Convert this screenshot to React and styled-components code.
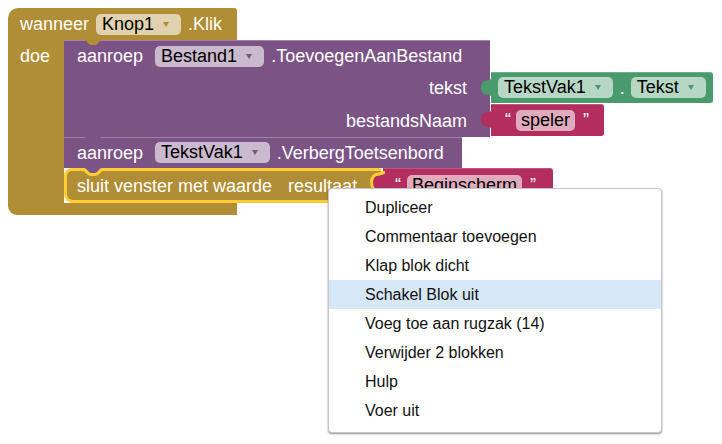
import React from 'react';
import styled, { createGlobalStyle } from 'styled-components';

const GOLD = '#B18E35';
const PURPLE = '#7C5385';
const GREEN = '#499B6D';
const RED = '#B32D5E';
const SELECT = '#FFCC33';

const GlobalStyle = createGlobalStyle`
    body {
        margin: 0;
        background: #fff;
        font-family: "Liberation Sans", Arial, sans-serif;
    }
`;

const Canvas = styled("div")`
    position: relative;
    width: 722px;
    height: 444px;
    overflow: hidden;
    background: #fff;
`;

const EventBlock = styled("div")`
    position: absolute;
    left: 8px;
    top: 8px;
    display: flex;
    flex-direction: column;
`;

const EventHeader = styled("div")`
    width: 229px;
    height: 32px;
    box-sizing: border-box;
    padding-left: 12px;
    display: flex;
    align-items: center;
    background: ${GOLD};
    border-radius: 10px 3px 0 0;
`;

const EventBody = styled("div")`
    display: flex;
`;

const Spine = styled("div")`
    width: 56px;
    flex-shrink: 0;
    box-sizing: border-box;
    padding-left: 12px;
    background: ${GOLD};
`;

const EventFooter = styled("div")`
    width: 229px;
    height: 12px;
    background: ${GOLD};
    border-radius: 0 0 0 9px;
`;

const Stack = styled("div")`
    position: relative;
    display: flex;
    flex-direction: column;
`;

const Label = styled("span")`
    color: #fff;
    font-size: 18px;
    line-height: 32px;
    white-space: nowrap;
    margin-left: ${props => props.$gap || 0}px;
`;

const Field = styled("span")`
    display: inline-flex;
    align-items: center;
    height: 21px;
    box-sizing: border-box;
    padding: ${props => props.$plain ? '0 5px' : '0 12px 0 6px'};
    margin-left: ${props => props.$gap || 0}px;
    border-radius: 5px;
    background: rgba(255, 255, 255, 0.6);
    color: #000;
    font-size: 18px;
    line-height: 21px;
    white-space: nowrap;
`;

const Arrow = styled("span")`
    width: 0;
    height: 0;
    margin-left: 9px;
    border-left: 3px solid transparent;
    border-right: 3px solid transparent;
    border-top: 5px solid ${props => props.$color};
`;

const Quote = styled("span")`
    color: #fff;
    font-size: 18px;
    line-height: 21px;
    margin: 0 ${props => props.$right || 0}px 0 ${props => props.$left || 0}px;
`;

const Statement = styled("div")`
    position: relative;
    display: flex;
    flex-direction: column;
`;

const Row = styled("div")`
    display: flex;
    align-items: flex-start;
`;

const Segment = styled("div")`
    width: ${props => props.$width}px;
    height: ${props => props.$height}px;
    box-sizing: border-box;
    display: flex;
    align-items: center;
    justify-content: ${props => props.$end ? 'flex-end' : 'flex-start'};
    padding: 0 23px 0 13px;
    background: ${props => props.$color};
    box-shadow: ${props => props.$top ? 'inset 0 1px 0 rgba(255, 255, 255, 0.28)' : 'none'};
`;

const ValueBlock = styled("div")`
    position: relative;
    height: ${props => props.$height}px;
    box-sizing: border-box;
    display: flex;
    align-items: center;
    padding: 0 ${props => props.$right}px 0 ${props => props.$left}px;
    margin-left: ${props => props.$gap || 0}px;
    background: ${props => props.$color};
    border-radius: 0 3px 3px 0;
    box-shadow: inset 0 1px 0 rgba(255, 255, 255, 0.2);
`;

const TabSvg = styled("svg")`
    position: absolute;
    left: -10px;
    top: ${props => props.$top}px;
    overflow: visible;
`;

const NotchSvg = styled("svg")`
    position: absolute;
    left: 20px;
    top: ${props => props.$top};
    z-index: 2;
    overflow: visible;
`;

const Selected = styled("div")`
    position: relative;
    width: 317px;
    height: 35px;
    box-sizing: border-box;
    display: flex;
    align-items: center;
    padding-left: 10px;
    background: ${GOLD};
    border: 3px solid ${SELECT};
    border-right: none;
    border-radius: 8px 0 0 9px;
`;

const Menu = styled("div")`
    position: absolute;
    left: 328px;
    top: 188px;
    width: 334px;
    box-sizing: border-box;
    padding: 4px 0 7px;
    background: #fff;
    border: 1px solid #c6c6c6;
    border-radius: 4px;
    box-shadow: 0 1px 2px rgba(0, 0, 0, 0.45);
    z-index: 10;
`;

const MenuItem = styled("div")`
    height: 29px;
    line-height: 29px;
    padding-left: 36px;
    font-size: 16px;
    color: #111;
    background: ${props => props.$active ? '#D6E8F7' : 'transparent'};
`;

// output tab of a value block, bulging to the left
const Tab = ({ color, top = 7, stroke }) => (
    <TabSvg width="11" height="17" viewBox="0 0 11 17" $top={top}>
        <path
            d="M11,0 C9,0 8,1.5 6,1.5 C2,1.5 0,4 0,8.5 C0,13 2,15.5 6,15.5 C8,15.5 9,17 11,17 Z"
            fill={color}
        />
        {stroke && (
            <path
                d="M12,-1.5 C9,-1.5 8,0 6,0 C1,0 -1.5,3.5 -1.5,8.5 C-1.5,13.5 1,17 6,17 C8,17 9,18.5 12,18.5"
                fill="none"
                stroke={stroke}
                strokeWidth="3"
            />
        )}
    </TabSvg>
);

// next-statement tab hanging into the block below
const Notch = ({ color, top, stroke }) => (
    <NotchSvg width="18" height="6" viewBox="0 0 18 6" $top={top}>
        <path d="M0,0 C3,0 4,5 7,5 L11,5 C14,5 15,0 18,0 Z" fill={color} />
        {stroke && (
            <path
                d="M-1,1.5 C2,1.5 3.5,6.5 7,6.5 L11,6.5 C14.5,6.5 16,1.5 19,1.5"
                fill="none"
                stroke={stroke}
                strokeWidth="3"
            />
        )}
    </NotchSvg>
);

const Dropdown = ({ children, arrow, gap }) => (
    <Field $gap={gap}>
        {children}
        <Arrow $color={arrow} />
    </Field>
);

const menuItems = [
    "Dupliceer",
    "Commentaar toevoegen",
    "Klap blok dicht",
    "Schakel Blok uit",
    "Voeg toe aan rugzak (14)",
    "Verwijder 2 blokken",
    "Hulp",
    "Voer uit"
];

export default function App() {
    return (
        <Canvas>
            <GlobalStyle />
            <EventBlock>
                <EventHeader>
                    <Label>wanneer</Label>
                    <Dropdown arrow={GOLD} gap={7}>Knop1</Dropdown>
                    <Label $gap={7}>.Klik</Label>
                </EventHeader>
                <EventBody>
                    <Spine>
                        <Label>doe</Label>
                    </Spine>
                    <Stack>
                        <Statement>
                            <Row>
                                <Segment $color={PURPLE} $width={426} $height={32} $top>
                                    <Label>aanroep</Label>
                                    <Dropdown arrow={PURPLE} gap={12}>Bestand1</Dropdown>
                                    <Label $gap={7}>.ToevoegenAanBestand</Label>
                                </Segment>
                            </Row>
                            <Row>
                                <Segment $color={PURPLE} $width={426} $height={32} $end>
                                    <Label>tekst</Label>
                                </Segment>
                                <ValueBlock $color={GREEN} $height={31} $left={7} $right={7} $gap={1}>
                                    <Tab color={GREEN} />
                                    <Dropdown arrow={GREEN}>TekstVak1</Dropdown>
                                    <Label $gap={7}>.</Label>
                                    <Dropdown arrow={GREEN} gap={6}>Tekst</Dropdown>
                                </ValueBlock>
                            </Row>
                            <Row>
                                <Segment $color={PURPLE} $width={426} $height={33} $end>
                                    <Label>bestandsNaam</Label>
                                </Segment>
                                <ValueBlock $color={RED} $height={32} $left={14} $right={15} $gap={1}>
                                    <Tab color={RED} />
                                    <Quote $right={5}>“</Quote>
                                    <Field $plain>speler</Field>
                                    <Quote $left={8}>”</Quote>
                                </ValueBlock>
                            </Row>
                            <Notch color={PURPLE} top="100%" />
                        </Statement>
                        <Statement>
                            <Segment $color={PURPLE} $width={398} $height={31} $top>
                                <Label>aanroep</Label>
                                <Dropdown arrow={PURPLE} gap={12}>TekstVak1</Dropdown>
                                <Label $gap={7}>.VerbergToetsenbord</Label>
                            </Segment>
                            <Notch color={PURPLE} top="100%" stroke={SELECT} />
                        </Statement>
                        <Row>
                            <Selected>
                                <Label>sluit venster met waarde</Label>
                                <Label $gap={16}>resultaat</Label>
                            </Selected>
                            <ValueBlock $color={RED} $height={34} $left={12} $right={17} $gap={2}>
                                <Tab color={RED} top={6} stroke={SELECT} />
                                <Quote $right={6}>“</Quote>
                                <Field $plain>Beginscherm</Field>
                                <Quote $left={8}>”</Quote>
                            </ValueBlock>
                        </Row>
                        <Notch color={GOLD} top="0" />
                    </Stack>
                </EventBody>
                <EventFooter />
            </EventBlock>
            <Menu>
                {menuItems.map((item, i) => (
                    <MenuItem key={item} $active={i === 3}>{item}</MenuItem>
                ))}
            </Menu>
        </Canvas>
    );
}
